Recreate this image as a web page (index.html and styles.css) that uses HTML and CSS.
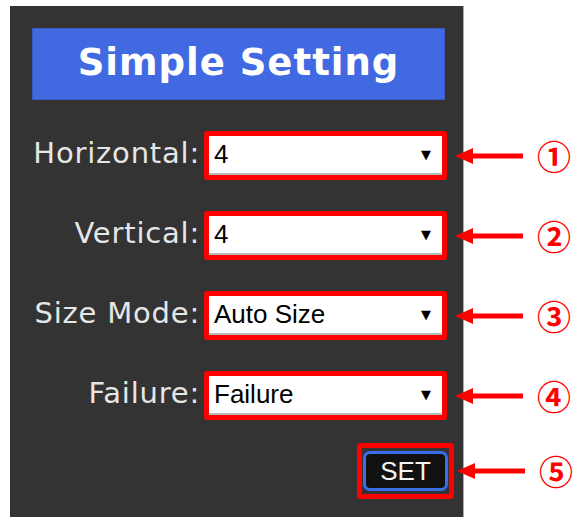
FILE: index.html
```html
<!DOCTYPE html>
<html lang="en">
<head>
  <meta charset="UTF-8">
  <title>Simple Setting</title>
  <link rel="stylesheet" href="styles.css">
</head>
<body>

  <div class="panel">
    <div class="title">Simple Setting</div>

    <div class="row">
      <label class="lbl">Horizontal:</label>
      <div class="mark">
        <div class="sel"><span>4</span><span class="caret">&#9660;</span></div>
      </div>
      <div class="note">
        <svg class="arrow" width="70" height="18" viewBox="0 0 70 18"><polygon points="0,9 18,1 18,6.5 68,6.5 68,11.5 18,11.5 18,17" fill="#ff0000"/></svg>
        <span class="num">&#9312;</span>
      </div>
    </div>

    <div class="row">
      <label class="lbl">Vertical:</label>
      <div class="mark">
        <div class="sel"><span>4</span><span class="caret">&#9660;</span></div>
      </div>
      <div class="note">
        <svg class="arrow" width="70" height="18" viewBox="0 0 70 18"><polygon points="0,9 18,1 18,6.5 68,6.5 68,11.5 18,11.5 18,17" fill="#ff0000"/></svg>
        <span class="num">&#9313;</span>
      </div>
    </div>

    <div class="row">
      <label class="lbl">Size Mode:</label>
      <div class="mark">
        <div class="sel"><span>Auto Size</span><span class="caret">&#9660;</span></div>
      </div>
      <div class="note">
        <svg class="arrow" width="70" height="18" viewBox="0 0 70 18"><polygon points="0,9 18,1 18,6.5 68,6.5 68,11.5 18,11.5 18,17" fill="#ff0000"/></svg>
        <span class="num">&#9314;</span>
      </div>
    </div>

    <div class="row">
      <label class="lbl">Failure:</label>
      <div class="mark">
        <div class="sel"><span>Failure</span><span class="caret">&#9660;</span></div>
      </div>
      <div class="note">
        <svg class="arrow" width="70" height="18" viewBox="0 0 70 18"><polygon points="0,9 18,1 18,6.5 68,6.5 68,11.5 18,11.5 18,17" fill="#ff0000"/></svg>
        <span class="num">&#9315;</span>
      </div>
    </div>

    <div class="row row-set">
      <div class="mark mark-btn">
        <button class="set">SET</button>
      </div>
      <div class="note note-set">
        <svg class="arrow" width="70" height="18" viewBox="0 0 70 18"><polygon points="0,9 18,1 18,6.5 68,6.5 68,11.5 18,11.5 18,17" fill="#ff0000"/></svg>
        <span class="num">&#9316;</span>
      </div>
    </div>
  </div>

</body>
</html>
```

FILE: styles.css
```css
body {
  margin: 0;
  background: #fff;
  overflow: hidden;
}

.panel {
  margin: 6px 0 0 10px;
  width: 454px;
  height: 520px;
  box-sizing: border-box;
  padding: 22px 0 0 22px;
  background: #333;
  border-right: 1px solid #aaa;
}

.title {
  width: 413px;
  height: 72px;
  box-sizing: border-box;
  border: 1px solid #3a5bc4;
  background: #4169e1;
  color: #fff;
  font-family: "DejaVu Sans", sans-serif;
  font-weight: bold;
  font-size: 37px;
  letter-spacing: 1px;
  line-height: 68px;
  text-align: center;
}

.row {
  display: flex;
  align-items: center;
  height: 49px;
  margin-top: 31px;
  margin-left: -22px;
}

.row:first-of-type {
  margin-top: 33px;
}

.row > * {
  flex-shrink: 0;
}

.lbl {
  width: 190px;
  padding-right: 4px;
  padding-bottom: 6px;
  text-align: right;
  color: #e6e6e6;
  font-family: "DejaVu Sans", sans-serif;
  font-size: 29px;
  letter-spacing: 0.8px;
  white-space: nowrap;
}

.mark {
  border: 5px solid #ff0000;
  border-radius: 3px;
}

.sel {
  display: flex;
  align-items: center;
  justify-content: space-between;
  width: 233px;
  height: 39px;
  box-sizing: border-box;
  padding: 0 11px 0 5px;
  background: #fff;
  border-bottom: 2px solid #bbb;
  color: #000;
  font-family: "Liberation Sans", Arial, sans-serif;
  font-size: 26px;
}

.caret {
  font-size: 13px;
  font-family: "DejaVu Sans", sans-serif;
}

.note {
  display: flex;
  align-items: center;
  margin-left: 8px;
}

.arrow {
  display: block;
}

.num {
  margin-left: 12px;
  color: #ff0000;
  font-family: "Noto Sans CJK JP", sans-serif;
  font-weight: bold;
  font-size: 34px;
  line-height: 40px;
}

.row-set {
  margin-top: 23px;
  height: 56px;
  padding-left: 347px;
}

.mark-btn {
  padding: 3px 1px;
}

.set {
  display: block;
  width: 85px;
  height: 40px;
  border: 3px solid #3a6ee8;
  border-radius: 7px;
  background: #111;
  color: #f4f4f4;
  font-family: "Liberation Sans", Arial, sans-serif;
  font-size: 26px;
  padding: 0;
}

.note-set {
  margin-left: 3px;
}
```
